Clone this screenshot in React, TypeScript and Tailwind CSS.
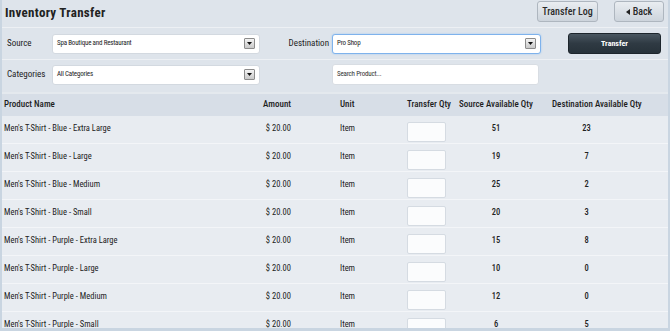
import React from 'react';

interface Row {
  name: string;
  amount: string;
  unit: string;
  source: number;
  dest: number;
}

const rows: Row[] = [
  { name: "Men's T-Shirt - Blue - Extra Large", amount: '$ 20.00', unit: 'Item', source: 51, dest: 23 },
  { name: "Men's T-Shirt - Blue - Large", amount: '$ 20.00', unit: 'Item', source: 19, dest: 7 },
  { name: "Men's T-Shirt - Blue - Medium", amount: '$ 20.00', unit: 'Item', source: 25, dest: 2 },
  { name: "Men's T-Shirt - Blue - Small", amount: '$ 20.00', unit: 'Item', source: 20, dest: 3 },
  { name: "Men's T-Shirt - Purple - Extra Large", amount: '$ 20.00', unit: 'Item', source: 15, dest: 8 },
  { name: "Men's T-Shirt - Purple - Large", amount: '$ 20.00', unit: 'Item', source: 10, dest: 0 },
  { name: "Men's T-Shirt - Purple - Medium", amount: '$ 20.00', unit: 'Item', source: 12, dest: 0 },
  { name: "Men's T-Shirt - Purple - Small", amount: '$ 20.00', unit: 'Item', source: 6, dest: 5 },
];

function SelectBox({ value, focused }: { value: string; focused?: boolean }) {
  return (
    <div
      className={`flex h-[20px] items-center justify-between rounded-[3px] bg-white pl-[4px] pr-[4px] ${
        focused
          ? 'w-[209px] border border-[#7eb2ec] shadow-[0_0_2px_#9cc6f3]'
          : 'w-[208px] border border-[#d3d9e0]'
      }`}
    >
      <span className="text-[7px] tracking-[-0.2px] text-[#1c1c1c]">{value}</span>
      <span className="flex h-[11px] w-[11px] items-center justify-center rounded-[1px] border border-[#8c8c8c] bg-gradient-to-b from-[#f4f4f4] to-[#c9c9c9]">
        <svg width="5" height="3" viewBox="0 0 5 3">
          <path d="M0 0 L5 0 L2.5 3 Z" fill="#111" />
        </svg>
      </span>
    </div>
  );
}

export default function App() {
  return (
    <div
      className="h-[331px] w-[670px] overflow-hidden border-x-[2px] border-b-[3px] border-[#c9d5e1] bg-[#dee4eb] font-stretch-condensed text-[#1d1d1d]"
      style={{ fontFamily: '"Roboto", "Liberation Sans", sans-serif' }}
    >
      {/* title bar */}
      <div className="flex h-[28px] items-start justify-between border-b border-[#edf0f4]">
        <div className="pl-[3px] pt-[5px] text-[13px] font-bold leading-[16px] tracking-[0.3px] text-[#222]">
          Inventory Transfer
        </div>
        <div className="flex gap-[16px] pr-[4px] pt-[1px]">
          <button className="h-[21px] w-[61px] rounded-[3px] border border-[#aeb6bf] bg-gradient-to-b from-[#e9edf1] to-[#cdd4dc] text-[10px] font-medium text-[#2a2a2a]">
            Transfer Log
          </button>
          <button className="flex h-[21px] w-[50px] items-center justify-center gap-[3px] rounded-[3px] border border-[#aeb6bf] bg-gradient-to-b from-[#e9edf1] to-[#cdd4dc] text-[10px] font-medium text-[#2a2a2a]">
            <svg width="4" height="6" viewBox="0 0 4 6">
              <path d="M4 0 L4 6 L0 3 Z" fill="#222" />
            </svg>
            Back
          </button>
        </div>
      </div>

      {/* source / destination */}
      <div className="flex h-[32px] items-center border-b border-[#edf0f4]">
        <div className="w-[50px] pl-[5px] text-[9px]">Source</div>
        <SelectBox value="Spa Boutique and Restaurant" />
        <div className="w-[72px] pr-[3px] text-right text-[9px]">Destination</div>
        <SelectBox value="Pro Shop" focused />
        <button className="ml-[27px] h-[21px] w-[93px] rounded-[3px] border border-[#1d252c] bg-gradient-to-b from-[#4a5761] via-[#2f3a43] to-[#27323a] text-[8px] font-bold text-white">
          Transfer
        </button>
      </div>

      {/* categories / search */}
      <div className="flex h-[29px] items-center">
        <div className="w-[50px] pl-[5px] text-[9px]">Categories</div>
        <SelectBox value="All Categories" />
        <div className="w-[72px]" />
        <div className="flex h-[21px] w-[207px] items-center rounded-[3px] border border-[#d8dde3] bg-white pl-[4px] text-[7px] tracking-[-0.2px] text-[#333]">
          Search Product...
        </div>
      </div>

      {/* table */}
      <div className="mt-[3px] border-t-[2px] border-[#e4e9ee]">
        <div className="flex h-[22px] items-center whitespace-nowrap bg-[#d7dee7] text-[9px] font-medium">
          <div className="w-[230px] pl-[2px]">Product Name</div>
          <div className="w-[59px] text-right">Amount</div>
          <div className="ml-[49px] w-[67px]">Unit</div>
          <div className="w-[52px]">Transfer Qty</div>
          <div className="w-[74px]">Source Available Qty</div>
          <div className="ml-[19px]">Destination Available Qty</div>
        </div>
        {rows.map((r) => (
          <div
            key={r.name}
            className="flex h-[28px] items-start whitespace-nowrap border-b border-[#f3f5f8] bg-[#e8ecf1] text-[8.5px] leading-[10px] text-[#222]"
          >
            <div className="w-[230px] pl-[2px] pt-[7px]">{r.name}</div>
            <div className="w-[59px] pt-[7px] text-right">{r.amount}</div>
            <div className="ml-[49px] w-[67px] pt-[7px]">{r.unit}</div>
            <div className="w-[52px] pt-[6px]">
              <input className="h-[20px] w-[39px] rounded-[2px] border border-[#d5dbe2] bg-[#fbfcfd]" />
            </div>
            <div className="w-[74px] pt-[7px] text-center font-medium">{r.source}</div>
            <div className="ml-[19px] w-[69px] pt-[7px] text-center font-medium">{r.dest}</div>
          </div>
        ))}
      </div>
    </div>
  );
}
